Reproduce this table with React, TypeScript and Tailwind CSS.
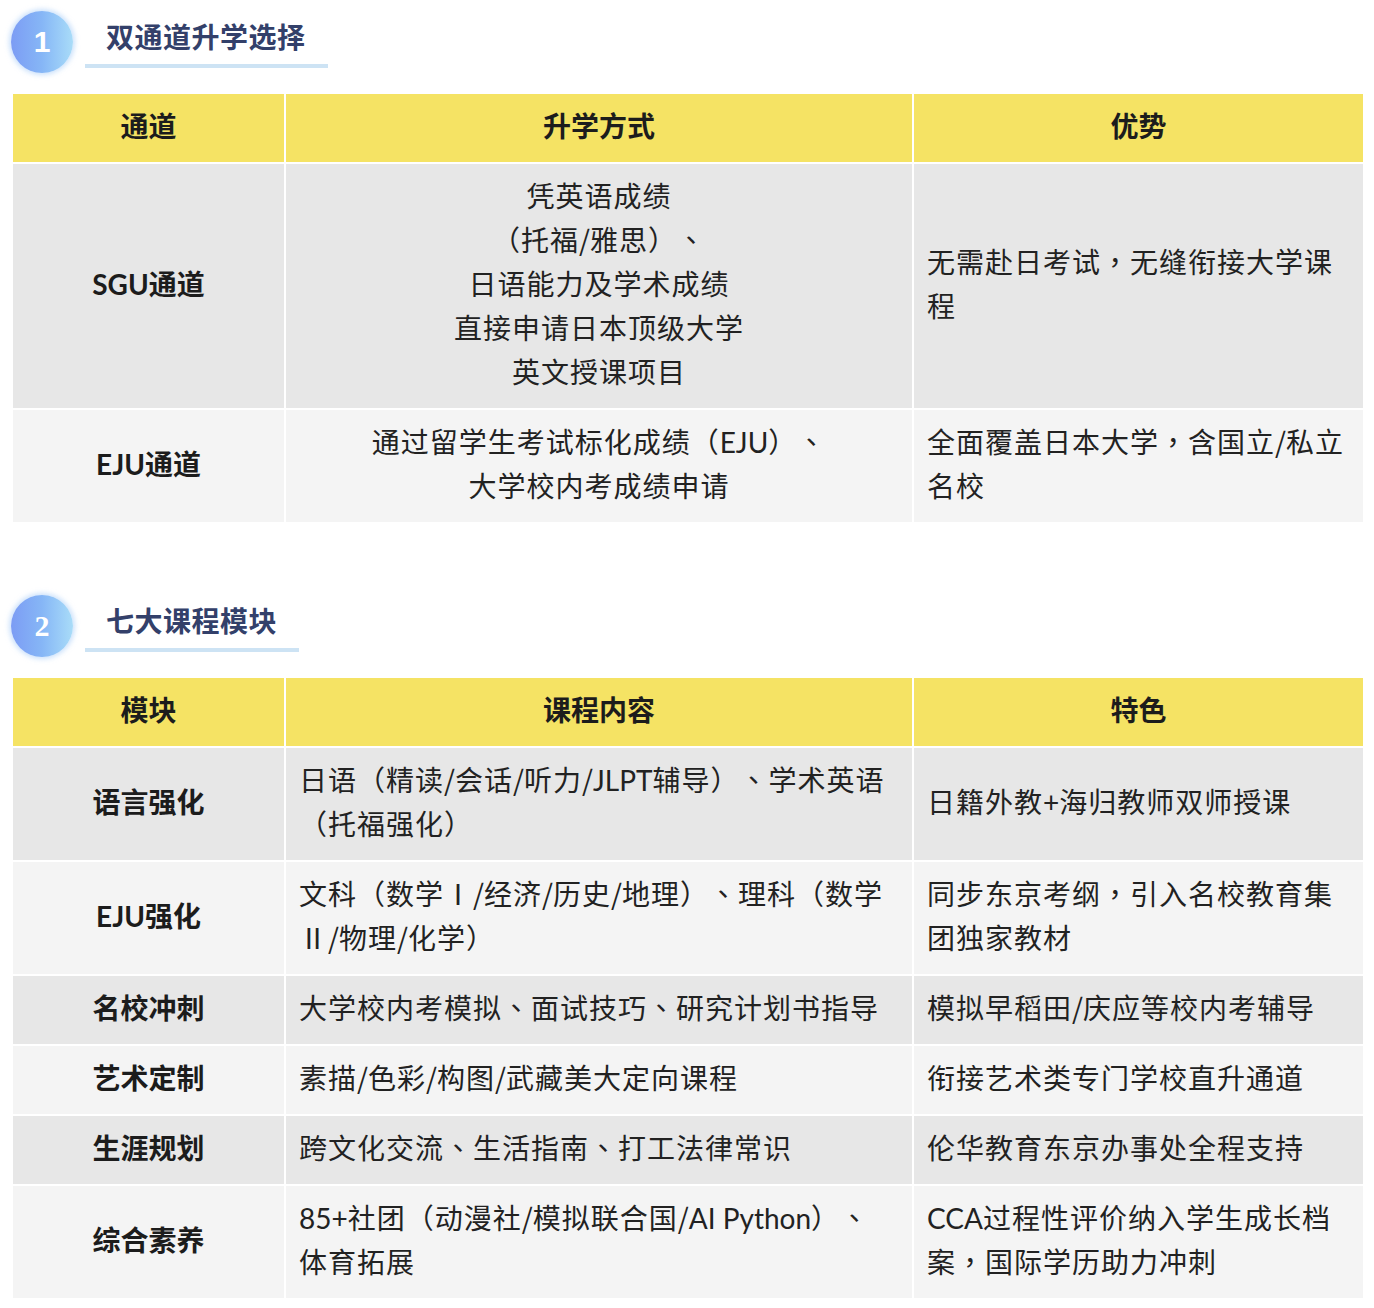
import React from "react";

const FONT = { fontFamily: '"Lato", "Noto Sans CJK SC", sans-serif' };
const TC = { fontFamily: '"Noto Sans CJK TC", sans-serif' };
const CJK = { fontFamily: '"Noto Sans CJK SC", sans-serif' };

type Row = { h: string; c2: string[]; c3: string[] };

function Heading({ n, title, serif }: { n: string; title: string; serif?: boolean }) {
  return (
    <div className="flex items-start">
      <div className="ml-[11px] w-[62px] h-[62px] rounded-full bg-gradient-to-r from-[#7c9cf4] via-[#86b6f6] to-[#a9dcf8] shadow-[0_0_5px_2px_rgba(160,200,248,0.55)] flex items-center justify-center">
        <span
          className="text-white font-bold text-[30px] leading-none"
          style={{ fontFamily: serif ? '"Liberation Serif", serif' : '"Liberation Sans", sans-serif' }}
        >
          {n}
        </span>
      </div>
      <div className="ml-[12px] mt-[7px] pl-[21px] pr-[22px] pb-[6px] border-b-4 border-[#cde3f4]">
        <div className="text-[28px] leading-[40px] font-bold text-[#33406a] tracking-[0.5px] -translate-y-[1px]" style={FONT}>
          {title}
        </div>
      </div>
    </div>
  );
}

function Punct({ text }: { text: string }) {
  const parts = text.split(/([，、]|[A-Za-z0-9+ ]+|\/)/).filter((p) => p !== "" && p !== undefined);
  return (
    <>
      {parts.map((p, i) => {
        if (p === "，" || p === "、")
          return (
            <span key={i} style={TC} className="leading-none">
              {p}
            </span>
          );
        if (p === "/")
          return (
            <span key={i} style={CJK} className="leading-none tracking-normal">
              {p}
            </span>
          );
        if (/^[A-Za-z0-9+ ]+$/.test(p))
          return (
            <span key={i} className="tracking-normal">
              {p}
            </span>
          );
        return <React.Fragment key={i}>{p}</React.Fragment>;
      })}
    </>
  );
}

function Lines({ lines }: { lines: string[] }) {
  return (
    <>
      {lines.map((l, i) => (
        <React.Fragment key={i}>
          <Punct text={l} />
          {i < lines.length - 1 && <br />}
        </React.Fragment>
      ))}
    </>
  );
}

function Table({ head, rows, centerC2 }: { head: string[]; rows: Row[]; centerC2?: boolean }) {
  return (
    <div
      className="ml-[13px] w-[1350px] grid grid-cols-[271px_626px_449px] gap-[2px] [text-spacing-trim:space-all]"
      style={FONT}
    >
      {head.map((h) => (
        <div
          key={h}
          className="bg-[#f5e364] pt-[10px] pb-[14px] text-center text-[28px] leading-[44px] font-bold text-[#1c1c1c]"
        >
          {h}
        </div>
      ))}
      {rows.map((r, i) => {
        const bg = i % 2 === 0 ? "bg-[#e7e7e7]" : "bg-[#f4f4f4]";
        return (
          <React.Fragment key={i}>
            <div
              className={`${bg} pt-[10px] pb-[14px] flex items-center justify-center text-[28px] leading-[44px] font-bold text-[#1c1c1c]`}
            >
              {r.h}
            </div>
            <div
              className={`${bg} pt-[10px] pb-[14px] px-[13px] flex items-center ${centerC2 ? "justify-center text-center" : ""} text-[28px] leading-[44px] tracking-[1px] text-[#222]`}
            >
              <div>
                <Lines lines={r.c2} />
              </div>
            </div>
            <div
              className={`${bg} pt-[10px] pb-[14px] px-[13px] flex items-center text-[28px] leading-[44px] tracking-[1px] text-[#222]`}
            >
              <div>
                <Lines lines={r.c3} />
              </div>
            </div>
          </React.Fragment>
        );
      })}
    </div>
  );
}

const rows1: Row[] = [
  {
    h: "SGU通道",
    c2: ["凭英语成绩", "（托福/雅思）、", "日语能力及学术成绩", "直接申请日本顶级大学", "英文授课项目"],
    c3: ["无需赴日考试，无缝衔接大学课", "程"],
  },
  {
    h: "EJU通道",
    c2: ["通过留学生考试标化成绩（EJU）、", "大学校内考成绩申请"],
    c3: ["全面覆盖日本大学，含国立/私立", "名校"],
  },
];

const rows2: Row[] = [
  {
    h: "语言强化",
    c2: ["日语（精读/会话/听力/JLPT辅导）、学术英语", "（托福强化）"],
    c3: ["日籍外教+海归教师双师授课"],
  },
  {
    h: "EJU强化",
    c2: ["文科（数学Ⅰ/经济/历史/地理）、理科（数学", "Ⅱ/物理/化学）"],
    c3: ["同步东京考纲，引入名校教育集", "团独家教材"],
  },
  {
    h: "名校冲刺",
    c2: ["大学校内考模拟、面试技巧、研究计划书指导"],
    c3: ["模拟早稻田/庆应等校内考辅导"],
  },
  {
    h: "艺术定制",
    c2: ["素描/色彩/构图/武藏美大定向课程"],
    c3: ["衔接艺术类专门学校直升通道"],
  },
  {
    h: "生涯规划",
    c2: ["跨文化交流、生活指南、打工法律常识"],
    c3: ["伦华教育东京办事处全程支持"],
  },
  {
    h: "综合素养",
    c2: ["85+社团（动漫社/模拟联合国/AI Python）、", "体育拓展"],
    c3: ["CCA过程性评价纳入学生成长档", "案，国际学历助力冲刺"],
  },
];

export default function App() {
  return (
    <div className="w-[1374px] min-h-[1308px] bg-white pt-[11px]">
      <Heading n="1" title="双通道升学选择" />
      <div className="mt-[21px]">
        <Table head={["通道", "升学方式", "优势"]} rows={rows1} centerC2 />
      </div>
      <div className="mt-[73px]">
        <Heading n="2" title="七大课程模块" serif />
      </div>
      <div className="mt-[21px]">
        <Table head={["模块", "课程内容", "特色"]} rows={rows2} />
      </div>
    </div>
  );
}
